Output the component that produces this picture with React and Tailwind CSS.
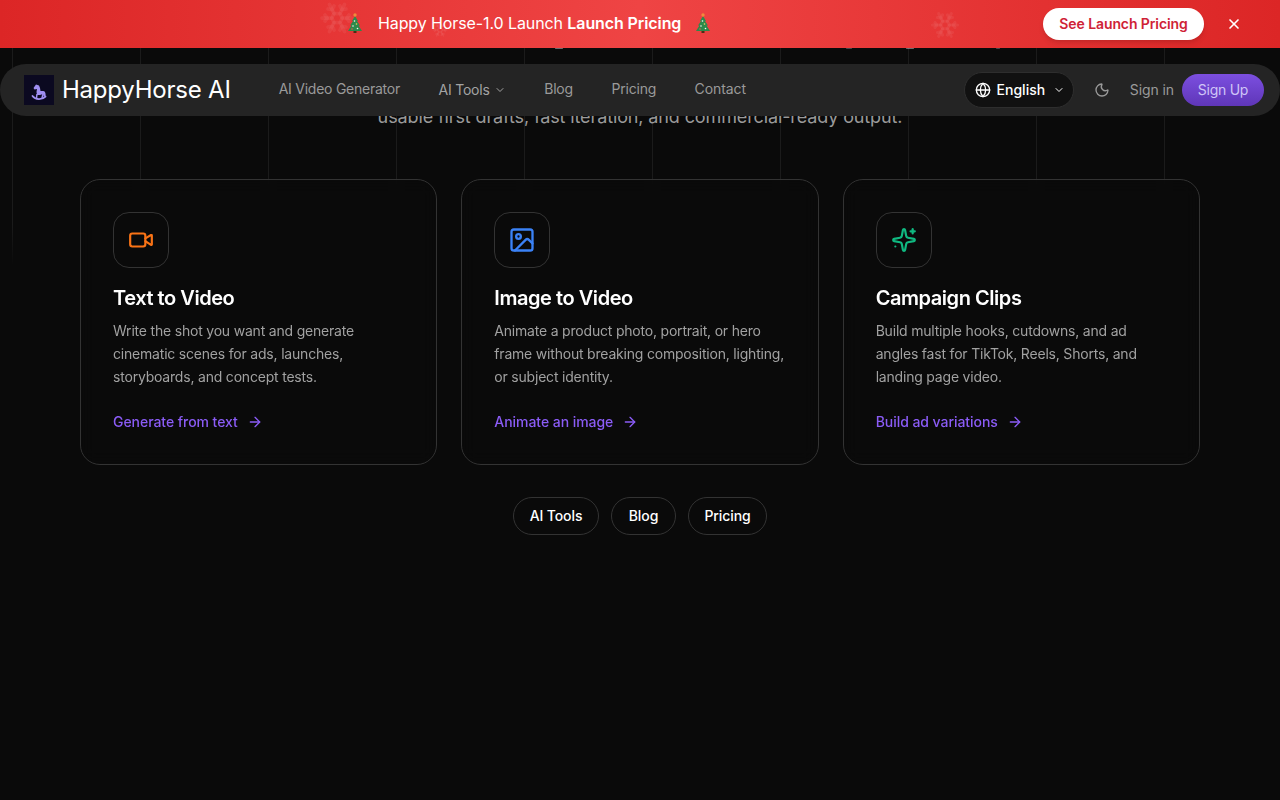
import { Video, Image, ArrowRight, ChevronDown, Globe, Moon, X, Snowflake } from 'lucide-react';

function CampaignIcon() {
  return (
    <svg width="26" height="26" viewBox="0 0 24 24" fill="none" stroke="currentColor" strokeWidth="2" strokeLinecap="round" strokeLinejoin="round" className="text-[#10b981]">
      <path d="M11.017 2.814a1 1 0 0 1 1.966 0l1.051 5.558a2 2 0 0 0 1.594 1.594l5.558 1.051a1 1 0 0 1 0 1.966l-5.558 1.051a2 2 0 0 0-1.594 1.594l-1.051 5.558a1 1 0 0 1-1.966 0l-1.051-5.558a2 2 0 0 0-1.594-1.594l-5.558-1.051a1 1 0 0 1 0-1.966l5.558-1.051a2 2 0 0 0 1.594-1.594z" />
      <path d="M20 2v4" />
      <path d="M22 4h-4" />
      <path d="M4 18h.01" />
    </svg>
  );
}

const cards = [
  {
    title: 'Text to Video',
    desc: 'Write the shot you want and generate cinematic scenes for ads, launches, storyboards, and concept tests.',
    link: 'Generate from text',
    icon: <Video size={26} strokeWidth={2} className="text-[#f97316]" />,
  },
  {
    title: 'Image to Video',
    desc: 'Animate a product photo, portrait, or hero frame without breaking composition, lighting, or subject identity.',
    link: 'Animate an image',
    icon: <Image size={28} strokeWidth={2} className="text-[#3b82f6]" />,
  },
  {
    title: 'Campaign Clips',
    desc: 'Build multiple hooks, cutdowns, and ad angles fast for TikTok, Reels, Shorts, and landing page video.',
    link: 'Build ad variations',
    icon: <CampaignIcon />,
  },
];

const pills = [
  { label: 'AI Tools', width: 'w-[86px]' },
  { label: 'Blog', width: 'w-[65px]' },
  { label: 'Pricing', width: 'w-[79px]' },
];

function Tree() {
  return (
    <svg width="18" height="20" viewBox="0 0 18 20" className="shrink-0">
      <rect x="7.500" y="17" width="3" height="3" fill="#4a2f17" />
      <path d="M9 3 L12 8 L11 8 L14 12.500 L12.500 12.500 L16 18 L2 18 L5.500 12.500 L4 12.500 L7 8 L6 8 Z" fill="#2b8a4b" />
      <circle cx="9" cy="2" r="1.700" fill="#f08a3c" />
      <circle cx="8.500" cy="8" r="0.800" fill="#f4f4f4" />
      <circle cx="10.500" cy="11" r="0.800" fill="#f4d35e" />
      <circle cx="7" cy="13" r="0.800" fill="#f4f4f4" />
      <circle cx="11.500" cy="15.500" r="0.800" fill="#f4f4f4" />
      <circle cx="6" cy="16" r="0.800" fill="#e2574c" />
    </svg>
  );
}

function HorseLogo() {
  return (
    <div className="w-[30px] h-[30px] bg-[#0b0920] flex items-center justify-center shrink-0">
      <svg width="16" height="20" viewBox="0 0 16 20" className="mt-[5px]">
        <path fill="#a08ff2" d="M5 1.500 L8 2.500 L9 5 L9.500 8 L12 8 C14 8 15 10 14.500 13 L12.500 13 L12 11 L9 12 L6 12 L5.500 9 L6 6 L3.500 6.500 L2.500 5 Z" />
        <path fill="none" stroke="#a08ff2" strokeWidth="1.800" strokeLinecap="round" d="M1.500 13 C4.500 17 11 17 14.500 13.500" />
        <path stroke="#a08ff2" strokeWidth="1.500" d="M6 11 L5.500 15 M12 11 L11 15" />
      </svg>
    </div>
  );
}

export default function App() {
  return (
    <div className="relative h-[800px] overflow-hidden bg-[#0a0a0a] font-['Inter',sans-serif] text-white">
      {/* faint grid lines behind the content */}
      <div className="absolute left-0 right-0 top-[48px] h-[220px] bg-[linear-gradient(to_right,rgba(255,255,255,0.07)_1px,transparent_1px)] bg-[size:128px_100%] bg-[position:12px_0] [mask-image:linear-gradient(to_bottom,black_80%,transparent)]" />

      {/* bottoms of the heading letters that scrolled under the banner */}
      <span className="absolute left-[555px] top-[48px] h-px w-2 rounded-full bg-white/40" />
      <span className="absolute left-[846px] top-[48px] h-px w-1.5 rounded-full bg-white/25" />
      <span className="absolute left-[906px] top-[48px] h-px w-2 rounded-full bg-white/40" />
      <span className="absolute left-[996px] top-[48px] h-px w-1 rounded-full bg-white/25" />

      {/* banner */}
      <div className="absolute top-0 left-0 right-0 z-20 h-12 bg-[linear-gradient(to_right,#dc2626,#ef4444,#dc2626)] flex items-center justify-center">
        <Snowflake size={36} strokeWidth={2.500} className="absolute left-[319px] top-0 text-white/[0.06]" />
        <Snowflake size={16} strokeWidth={2.500} className="absolute left-[432px] top-[22px] text-white/[0.06]" />
        <Snowflake size={30} strokeWidth={2.500} className="absolute left-[930px] top-[10px] text-white/[0.06]" />
        <div className="absolute left-[346px] top-[11px] flex items-center">
          <Tree />
          <span className="ml-[14px] text-base leading-6 tracking-[-0.1px]">Happy Horse-1.0 Launch <span className="font-semibold">Launch Pricing</span></span>
          <span className="ml-[13px]"><Tree /></span>
        </div>
        <a className="absolute left-[1043px] top-[8px] h-[32px] w-[161px] rounded-full bg-white text-[#cf2236] text-sm tracking-[-0.1px] font-semibold flex items-center justify-center shadow-md">See Launch Pricing</a>
        <X size={16} strokeWidth={2.500} className="absolute left-[1226px] top-[16px]" />
      </div>

      {/* nav */}
      <nav className="absolute top-16 left-0 right-0 z-10 h-[52px] rounded-full bg-[#242424] flex items-center pl-6 pr-4">
        <HorseLogo />
        <span className="ml-2 text-2xl tracking-[-0.22px] text-white">HappyHorse AI</span>
        <div className="ml-12 flex items-center gap-[38.500px] text-sm tracking-[-0.2px] text-[#9a9a9a]">
          <span className="-translate-y-px tracking-[-0.25px]">AI Video Generator</span>
          <span className="flex items-center gap-1 text-[#a3a3a3]">AI Tools <ChevronDown size={12} /></span>
          <span className="-translate-y-px">Blog</span>
          <span className="-translate-y-px">Pricing</span>
          <span className="-translate-y-px tracking-[-0.1px]">Contact</span>
        </div>
        <div className="ml-auto flex items-center">
          <div className="h-9 w-[110px] pl-0.5 rounded-full bg-[#111111] border border-[#2e2e2e] flex items-center justify-center gap-1.5 text-sm font-medium">
            <Globe size={16} /> English <ChevronDown size={12} className="ml-0.5" />
          </div>
          <Moon size={16} className="ml-[20px] text-[#9a9a9a]" />
          <span className="ml-[20px] text-sm tracking-[-0.1px] text-[#9a9a9a]">Sign in</span>
          <span className="ml-2 h-8 w-[82px] rounded-full bg-gradient-to-b from-[#7c4fe0] to-[#5f36b8] text-sm tracking-[-0.25px] text-[#cfc5f7] flex items-center justify-center">Sign Up</span>
        </div>
      </nav>

      {/* page content, scrolled under the nav */}
      <main className="relative pt-[105px]">
        <p className="text-center text-lg leading-6 tracking-[-0.12px] text-[#9a9a9a]">usable first drafts, fast iteration, and commercial-ready output.</p>
        <div className="mt-[50px] mx-20 grid grid-cols-3 gap-6">
          {cards.map(c => (
            <div key={c.title} className="h-[286px] rounded-[20px] border border-[#333333] bg-[#0a0a0a]/80 backdrop-blur-sm p-8">
              <div className="w-14 h-14 rounded-2xl border border-[#333333] flex items-center justify-center">{c.icon}</div>
              <h3 className="mt-4 text-xl font-semibold leading-7 tracking-[-0.45px]">{c.title}</h3>
              <p className="mt-[7px] text-sm leading-[23px] tracking-[-0.2px] text-[#a1a1a1]">{c.desc}</p>
              <a className="mt-6 flex items-center gap-[9px] text-sm font-medium tracking-[-0.05px] text-[#8b5cf6]">{c.link} <ArrowRight size={16} /></a>
            </div>
          ))}
        </div>
        <div className="mt-8 flex justify-center gap-3">
          {pills.map(p => (
            <a key={p.label} className={`h-[38px] ${p.width} rounded-full border border-[#333333] flex items-center justify-center text-sm font-medium tracking-[-0.1px] text-white`}>{p.label}</a>
          ))}
        </div>
      </main>
    </div>
  );
}
